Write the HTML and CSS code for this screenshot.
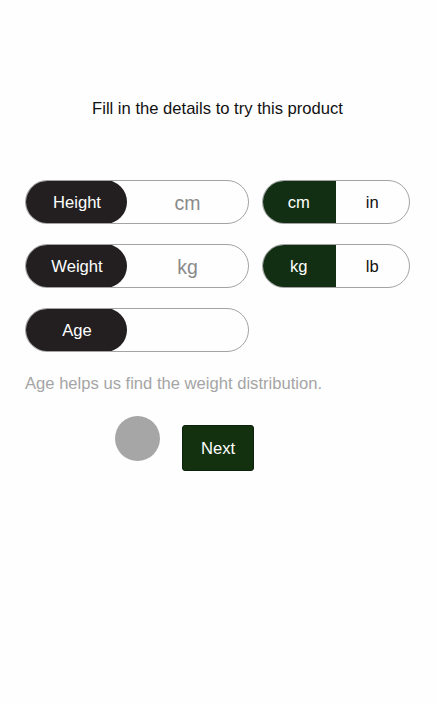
FILE: index.html
```html
<!DOCTYPE html>
<html lang="en">
<head>
<meta charset="utf-8">
<title>Try this product</title>
<link rel="stylesheet" href="styles.css">
</head>
<body>
<main class="page">
  <h1 class="title">Fill in the details to try this product</h1>
  <div class="form">
    <div class="row">
      <div class="field">
        <span class="label">Height</span>
        <span class="placeholder">cm</span>
      </div>
      <div class="toggle">
        <span class="opt active">cm</span>
        <span class="opt">in</span>
      </div>
    </div>
    <div class="row">
      <div class="field">
        <span class="label">Weight</span>
        <span class="placeholder">kg</span>
      </div>
      <div class="toggle">
        <span class="opt active">kg</span>
        <span class="opt">lb</span>
      </div>
    </div>
    <div class="row">
      <div class="field">
        <span class="label">Age</span>
        <span class="placeholder"></span>
      </div>
    </div>
  </div>
  <p class="hint">Age helps us find the weight distribution.</p>
  <div class="actions">
    <span class="dot"></span>
    <button class="next">Next</button>
  </div>
</main>
</body>
</html>
```

FILE: styles.css
```css
html, body {
  margin: 0;
  padding: 0;
  background: #fefefe;
}
body {
  font-family: "Liberation Sans", Arial, sans-serif;
  color: #111;
}
.page {
  width: 436px;
  height: 705px;
  box-sizing: border-box;
  padding: 98px 26px 0 25px;
}
.title {
  margin: 0;
  font-size: 16.6px;
  font-weight: normal;
  text-align: center;
  line-height: 22px;
  color: #111;
}
.form {
  margin-top: 60px;
  display: flex;
  flex-direction: column;
  gap: 20px;
}
.row {
  display: flex;
  gap: 13px;
  height: 44px;
}
.field {
  width: 224px;
  height: 44px;
  box-sizing: border-box;
  border: 1px solid #a3a3a3;
  border-radius: 22px;
  display: flex;
  overflow: hidden;
}
.label {
  width: 102px;
  box-sizing: border-box;
  margin: -1px 0 -1px -1px;
  background: #231f20;
  color: #fff;
  border-radius: 22px;
  font-size: 16.6px;
  display: flex;
  align-items: center;
  justify-content: center;
  padding: 2px 0 0 2px;
}
.placeholder {
  flex: 1;
  display: flex;
  align-items: center;
  justify-content: center;
  font-size: 19.5px;
  color: #8a8a8a;
  padding-top: 2px;
}
.toggle {
  width: 148px;
  height: 44px;
  box-sizing: border-box;
  border: 1px solid #a3a3a3;
  border-radius: 22px;
  display: flex;
  overflow: hidden;
}
.opt {
  flex: 1;
  display: flex;
  align-items: center;
  justify-content: center;
  font-size: 16.6px;
  color: #111;
  padding-top: 1px;
}
.opt.active {
  background: #122f13;
  color: #fff;
  margin: -1px 0 -1px -1px;
}
.hint {
  margin: 22px 0 0;
  font-size: 16.6px;
  line-height: 20px;
  color: #a5a5a5;
}
.actions {
  margin-top: 22px;
  display: flex;
  align-items: center;
  gap: 22px;
  padding-left: 90px;
}
.dot {
  width: 45px;
  height: 45px;
  border-radius: 50%;
  background: #a6a6a6;
  margin-top: -10px;
}
.next {
  width: 72px;
  height: 46px;
  background: #13300f;
  border: 1px solid #0c220a;
  border-radius: 3px;
  color: #fff;
  font-family: "Liberation Sans", Arial, sans-serif;
  font-size: 16.6px;
  padding: 2px 0 0;
  margin-top: 9px;
}
```
